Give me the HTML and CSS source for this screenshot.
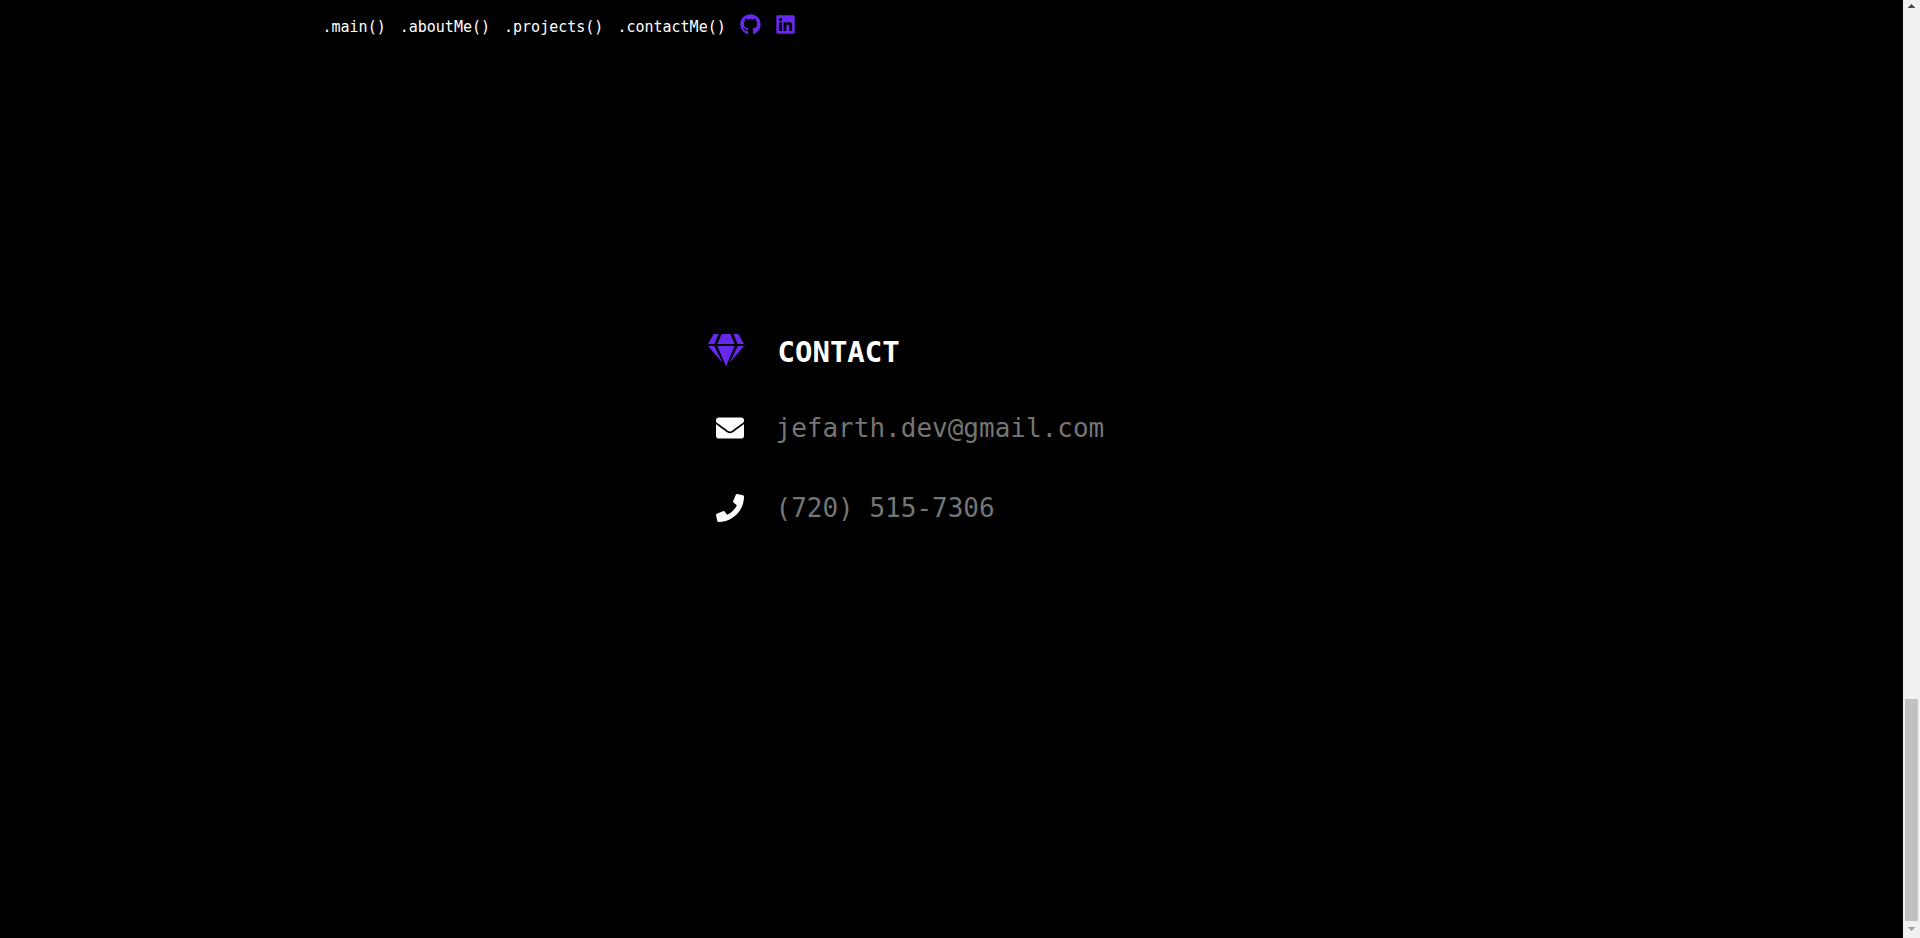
FILE: index.html
```html
<!DOCTYPE html>
<html lang="en">
<head>
<meta charset="utf-8">
<meta name="viewport" content="width=device-width, initial-scale=1">
<title>Contact</title>
<link rel="stylesheet" href="styles.css">
</head>
<body>
<div class="page">
  <header class="header">
    <nav class="nav">
      <a href="#main">.main()</a>
      <a href="#about">.aboutMe()</a>
      <a href="#projects">.projects()</a>
      <a href="#contact">.contactMe()</a>
      <a class="social" href="#github" aria-label="GitHub"><svg class="social-icon" viewBox="0 0 496 512"><path d="M244.800 8C106.100 8 0 113.300 0 252c0 110.900 69.800 205.800 169.500 239.200 12.800 2.300 17.300-5.600 17.300-12.100 0-6.200-.3-40.400-.3-61.400 0 0-70 15-84.700-29.800 0 0-11.400-29.100-27.800-36.600 0 0-22.900-15.700 1.600-15.400 0 0 24.900 2 38.600 25.800 21.900 38.600 58.600 27.500 72.900 20.900 2.300-16 8.800-27.100 16-33.700-55.900-6.200-112.300-14.300-112.300-110.500 0-27.500 7.600-41.300 23.600-58.900-2.600-6.500-11.100-33.300 2.600-67.900 20.900-6.500 69 27 69 27 20-5.600 41.500-8.500 62.800-8.500s42.800 2.900 62.800 8.500c0 0 48.100-33.600 69-27 13.700 34.700 5.200 61.400 2.600 67.900 16 17.700 25.800 31.500 25.800 58.900 0 96.500-58.900 104.200-114.800 110.500 9.200 7.900 17 22.900 17 46.400 0 33.700-.3 75.400-.3 83.600 0 6.500 4.600 14.400 17.300 12.100C428.200 457.800 496 362.900 496 252 496 113.300 383.500 8 244.800 8z"/></svg></a>
      <a class="social" href="#linkedin" aria-label="LinkedIn"><svg class="social-icon" viewBox="0 0 448 512"><path d="M416 32H31.900C14.300 32 0 46.500 0 64.300v383.400C0 465.500 14.300 480 31.900 480H416c17.600 0 32-14.500 32-32.300V64.300c0-17.800-14.400-32.300-32-32.300zM135.400 416H69V202.200h66.500V416zm-33.200-243c-21.300 0-38.500-17.300-38.500-38.500S80.900 96 102.200 96c21.200 0 38.500 17.300 38.500 38.500 0 21.300-17.200 38.500-38.500 38.500zm282.100 243h-66.400V312c0-24.800-.5-56.700-34.500-56.700-34.600 0-39.900 27-39.900 54.900V416h-66.400V202.200h63.700v29.200h.9c8.900-16.800 30.600-34.500 62.900-34.500 67.200 0 79.700 44.300 79.700 101.900V416z"/></svg></a>
    </nav>
  </header>
  <main class="contact" id="contact">
    <div class="row heading">
      <svg class="gem" viewBox="0 0 576 512" aria-hidden="true"><path d="M485.500 0L576 160H474.900L405.700 0h79.800zm-128 0l69.200 160H149.300L218.500 0h139zm-267 0h79.800l-69.200 160H0L90.500 0zM0 192h100.700l123 251.700c1.500 3.100-2.700 5.900-5 3.300L0 192zm148.200 0h279.600l-137 318.200c-1 2.400-4.500 2.400-5.500 0L148.200 192zm204.100 251.700l123-251.700H576L357.300 446.900c-2.300 2.700-6.500-.1-5-3.200z"/></svg>
      <h1>CONTACT</h1>
    </div>
    <div class="row">
      <svg class="icon" viewBox="0 0 512 512" aria-hidden="true"><path d="M502.300 190.800c3.900-3.100 9.700-.2 9.700 4.700V400c0 26.500-21.500 48-48 48H48c-26.500 0-48-21.500-48-48V195.600c0-5 5.700-7.800 9.700-4.700 22.400 17.400 52.100 39.500 154.100 113.600 21.100 15.400 56.700 47.800 92.200 47.600 35.700.3 72-32.800 92.300-47.600 102-74.100 131.600-96.300 154-113.700zM256 320c23.200.4 56.600-29.200 73.400-41.400 132.700-96.300 142.800-104.700 173.400-128.700 5.800-4.500 9.200-11.500 9.200-18.900v-19c0-26.500-21.500-48-48-48H48c-26.500 0-48 21.500-48 48v19c0 7.400 3.400 14.300 9.200 18.900 30.600 23.900 40.700 32.400 173.400 128.700 16.800 12.200 50.200 41.800 73.400 41.400z"/></svg>
      <p>jefarth.dev@gmail.com</p>
    </div>
    <div class="row">
      <svg class="icon" viewBox="0 0 512 512" aria-hidden="true"><path d="M493.400 24.600l-104-24c-11.300-2.600-22.900 3.300-27.500 13.900l-48 112c-4.200 9.800-1.400 21.300 6.900 28l60.600 49.600c-36 76.700-98.900 140.500-177.200 177.200l-49.600-60.600c-6.800-8.300-18.200-11.100-28-6.900l-112 48C3.900 366.500-2 378.100.6 389.400l24 104C27.100 504.200 36.700 512 48 512c256.100 0 464-207.500 464-464 0-11.200-7.700-20.900-18.600-23.400z"/></svg>
      <p>(720) 515-7306</p>
    </div>
  </main>
</div>
<div class="scrollbar" aria-hidden="true">
  <svg class="arrow" viewBox="0 0 17 17"><path fill="#505050" d="M8 4h1v1h1v1h1v1h1v1H5V7h1V6h1V5h1z"/></svg>
  <div class="track"><div class="thumb"></div></div>
  <svg class="arrow" viewBox="0 0 17 17"><path fill="#a3a3a3" d="M5 6h7v1h-1v1h-1v1H9v1H8V9H7V8H6V7H5z"/></svg>
</div>
</body>
</html>
```
FILE: styles.css
```css
* {
  box-sizing: border-box;
}

body {
  margin: 0;
  min-height: 100vh;
  display: flex;
  background: #000;
  color: #fff;
  font-family: "DejaVu Sans Mono", monospace;
}

.page {
  flex: 1;
  min-width: 0;
}

.header {
  max-width: 1258px;
  margin: 0 auto;
}

.nav {
  display: flex;
  flex-wrap: wrap;
  align-items: flex-start;
  gap: 14px;
  padding: 14px 0;
  font-size: 15px;
  line-height: 26px;
}

.nav a {
  color: #fff;
  text-decoration: none;
}

.social {
  display: flex;
  width: 21px;
  height: 24px;
}

.social-icon {
  width: 21px;
  height: 21px;
  fill: #6728ee;
}

.contact {
  display: flex;
  flex-direction: column;
  gap: 36px;
  max-width: 488px;
  margin: 0 auto;
  padding: 280px 0 80px;
}

.row {
  display: grid;
  grid-template-columns: 36px 1fr;
  column-gap: 32px;
  align-items: center;
  line-height: 44px;
}

.row h1,
.row p {
  margin: 0;
}

.row h1 {
  font-size: 29px;
}

.row p {
  color: #757575;
  font-size: 26px;
}

.heading {
  column-gap: 34px;
  align-items: start;
  line-height: 36px;
}

.gem {
  width: 36px;
  height: 32px;
  fill: #6728ee;
}

.icon {
  width: 28px;
  height: 28px;
  justify-self: end;
  fill: #fff;
}

.scrollbar {
  display: flex;
  flex-direction: column;
  width: 17px;
  height: 100vh;
  background: #f1f1f1;
}

.arrow {
  width: 17px;
  height: 17px;
}

.track {
  display: flex;
  flex: 1;
  flex-direction: column;
  justify-content: flex-end;
  padding: 0 2px;
}

.thumb {
  height: 24.6%;
  background: #c1c1c1;
}
```
